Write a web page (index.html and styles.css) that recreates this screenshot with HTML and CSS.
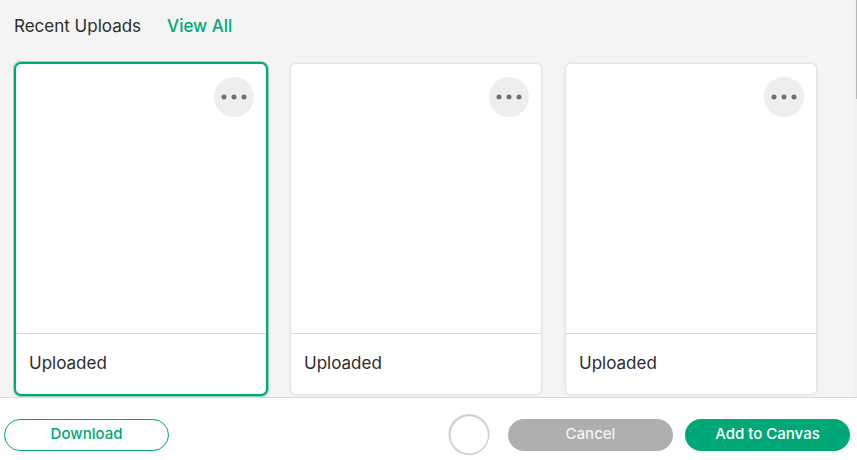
FILE: index.html
```html
<!DOCTYPE html>
<html lang="en">
<head>
<meta charset="utf-8">
<meta name="viewport" content="width=device-width, initial-scale=1">
<title>Recent Uploads</title>
<link rel="stylesheet" href="styles.css">
</head>
<body>
<main class="library">
  <header class="library-header">
    <h1 class="title">Recent Uploads</h1>
    <a class="view-all" href="#">View All</a>
  </header>
  <div class="cards">
    <article class="card selected">
      <div class="preview">
        <button class="more" type="button" aria-label="More options"><svg width="26" height="6" viewBox="0 0 26 6" fill="currentColor"><circle cx="3" cy="3" r="2.5"/><circle cx="13" cy="3" r="2.5"/><circle cx="23" cy="3" r="2.5"/></svg></button>
      </div>
      <div class="caption">Uploaded</div>
    </article>
    <article class="card">
      <div class="preview">
        <button class="more" type="button" aria-label="More options"><svg width="26" height="6" viewBox="0 0 26 6" fill="currentColor"><circle cx="3" cy="3" r="2.5"/><circle cx="13" cy="3" r="2.5"/><circle cx="23" cy="3" r="2.5"/></svg></button>
      </div>
      <div class="caption">Uploaded</div>
    </article>
    <article class="card">
      <div class="preview">
        <button class="more" type="button" aria-label="More options"><svg width="26" height="6" viewBox="0 0 26 6" fill="currentColor"><circle cx="3" cy="3" r="2.5"/><circle cx="13" cy="3" r="2.5"/><circle cx="23" cy="3" r="2.5"/></svg></button>
      </div>
      <div class="caption">Uploaded</div>
    </article>
  </div>
  <div class="scroll-track"><div class="scroll-thumb"></div></div>
</main>
<footer class="actions">
  <button class="button outline" type="button">Download</button>
  <div class="actions-end">
    <svg class="ring" width="42" height="42" viewBox="0 0 42 42" aria-hidden="true"><circle cx="21" cy="20.5" r="20.5" fill="#cecece"/><ellipse cx="21.2" cy="20.9" rx="18.7" ry="18.6" fill="#fff"/></svg>
    <button class="button muted" type="button">Cancel</button>
    <button class="button primary" type="button">Add to Canvas</button>
  </div>
</footer>
</body>
</html>
```
FILE: styles.css
```css
* {
  box-sizing: border-box;
}

body {
  margin: 0;
  height: 100vh;
  display: flex;
  flex-direction: column;
  background: #fff;
  color: #2c2c2c;
  font-family: Inter, "Liberation Sans", sans-serif;
  font-size: 17px;
  line-height: 24px;
}

.library {
  position: relative;
  flex: 1;
  min-height: 0;
  overflow: hidden;
  padding: 14px 16px 0;
  background: #f4f4f4;
}

.library-header {
  display: flex;
  gap: 26px;
  margin: 0 -2px 26px;
}

.title {
  margin: 0;
  font-size: 17px;
  font-weight: 400;
}

.view-all {
  color: #00a878;
  font-weight: 500;
  text-decoration: none;
}

.cards {
  display: grid;
  grid-template-columns: repeat(auto-fill, 250px);
  gap: 25px;
}

.card {
  border-radius: 5px;
  background: #fff;
  box-shadow: 0 0 2px 1px #dedede;
}

.card.selected {
  box-shadow: 0 0 0 2px #00a878, 0 0 0 3px rgba(0, 168, 120, 0.4);
}

.preview {
  display: flex;
  justify-content: flex-end;
  align-items: flex-start;
  height: 270px;
  padding: 13px 12px;
  border-bottom: 1px solid #d8d8d8;
}

.more {
  display: flex;
  align-items: center;
  justify-content: center;
  width: 40px;
  height: 40px;
  padding: 0;
  border: 0;
  border-radius: 50%;
  background: #eee;
  color: #707070;
}

.caption {
  padding: 17px 13px 19px;
}

.scroll-track {
  position: absolute;
  top: 0;
  right: 0;
  bottom: 0;
  width: 3px;
  background: #f0f0f0;
}

.scroll-thumb {
  width: 1px;
  height: 25%;
  margin-left: auto;
  background: #b8b8b8;
}

.actions {
  display: flex;
  align-items: center;
  justify-content: space-between;
  padding: 16px 7px 4px 4px;
  border-top: 1px solid #d8d8d8;
}

.actions-end {
  display: flex;
  align-items: center;
  gap: 12px;
}

.ring {
  margin-right: 6px;
}

.button {
  width: 165px;
  height: 32px;
  padding: 0 0 4px;
  border: 1px solid transparent;
  border-radius: 16px;
  font-family: inherit;
  font-size: 15px;
  font-weight: 500;
}

.outline {
  border-color: #00a878;
  background: #fff;
  color: #00a878;
}

.muted {
  background: #afafaf;
  color: #f4f4f4;
}

.primary {
  background: #00a878;
  color: #fff;
}
```
